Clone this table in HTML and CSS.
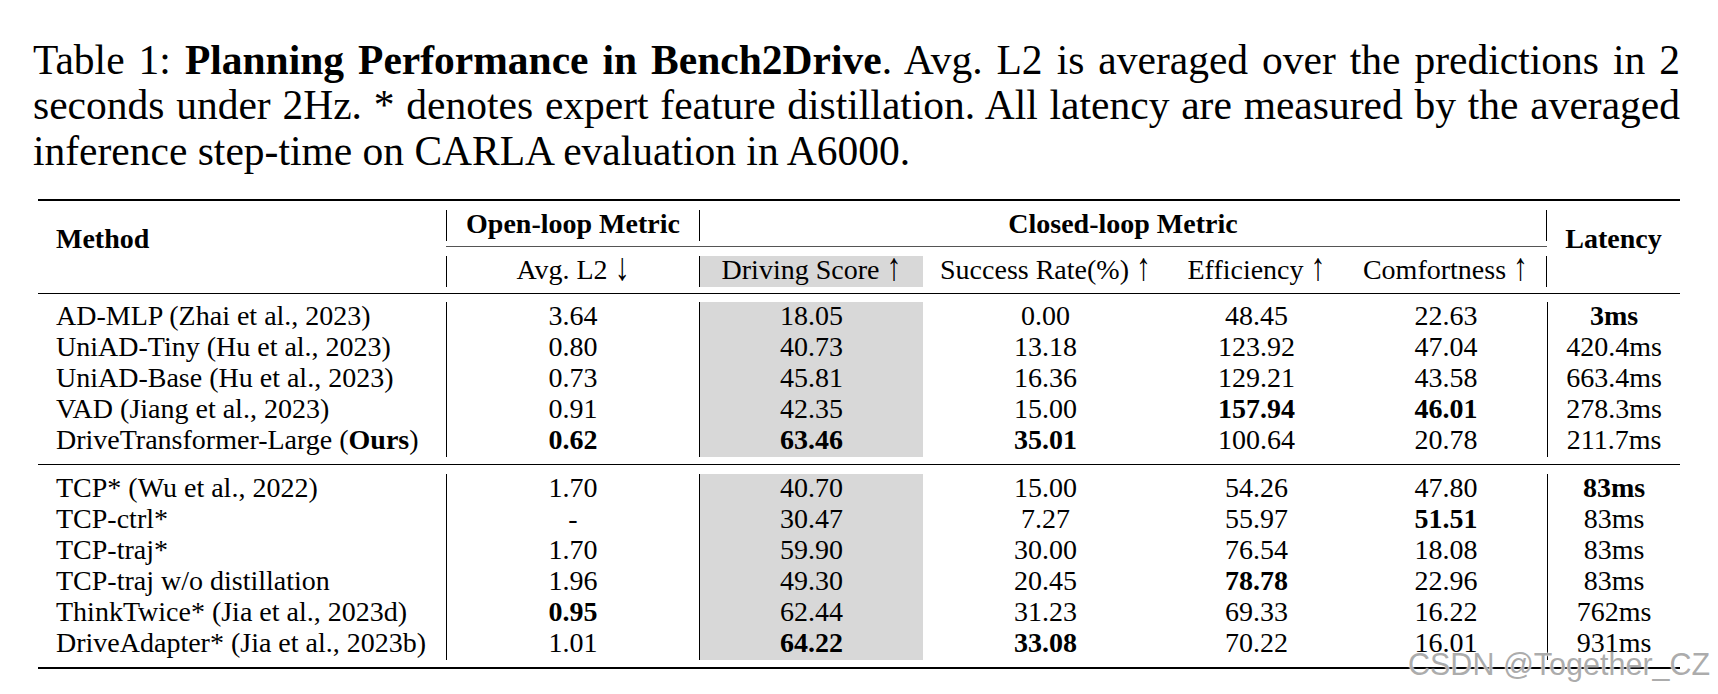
FILE: index.html
```html
<!DOCTYPE html>
<html>
<head>
<meta charset="utf-8">
<title>Table 1</title>
<link rel="stylesheet" href="styles.css">
</head>
<body>
<div class="page">
  <div class="caption">
    <div class="cap-line">Table 1: <b>Planning Performance in Bench2Drive</b>. Avg. L2 is averaged over the predictions in 2</div>
    <div class="cap-line">seconds under 2Hz. * denotes expert feature distillation. All latency are measured by the averaged</div>
    <div class="cap-line last">inference step-time on CARLA evaluation in A6000.</div>
  </div>

  <div class="table">
    <div class="rule thick"></div>
    <div class="thead">
      <div class="h-method">Method</div>
      <div class="h-group open"><div class="bar bl">Open-loop Metric</div></div>
      <div class="h-group closed"><div class="bar bl br">Closed-loop Metric</div></div>
      <div class="h-latency">Latency</div>
      <div class="h-sub c2"><div class="bar bl">Avg. L2 <span class="arrow">↓</span></div></div>
      <div class="h-sub c3"><div class="bar bl shade">Driving Score <span class="arrow">↑</span></div></div>
      <div class="h-sub c4"><div class="bar">Success Rate(%) <span class="arrow">↑</span></div></div>
      <div class="h-sub c5"><div class="bar">Efficiency <span class="arrow">↑</span></div></div>
      <div class="h-sub c6"><div class="bar br">Comfortness <span class="arrow">↑</span></div></div>
    </div>
    <div class="rule thin"></div>

    <div class="tbody">
      <div class="tr"><div class="td name">AD-MLP (Zhai et al., 2023)</div><div class="td bl">3.64</div><div class="td bl shade">18.05</div><div class="td">0.00</div><div class="td">48.45</div><div class="td">22.63</div><div class="td bl"><b>3ms</b></div></div>
      <div class="tr"><div class="td name">UniAD-Tiny (Hu et al., 2023)</div><div class="td bl">0.80</div><div class="td bl shade">40.73</div><div class="td">13.18</div><div class="td">123.92</div><div class="td">47.04</div><div class="td bl">420.4ms</div></div>
      <div class="tr"><div class="td name">UniAD-Base (Hu et al., 2023)</div><div class="td bl">0.73</div><div class="td bl shade">45.81</div><div class="td">16.36</div><div class="td">129.21</div><div class="td">43.58</div><div class="td bl">663.4ms</div></div>
      <div class="tr"><div class="td name">VAD (Jiang et al., 2023)</div><div class="td bl">0.91</div><div class="td bl shade">42.35</div><div class="td">15.00</div><div class="td"><b>157.94</b></div><div class="td"><b>46.01</b></div><div class="td bl">278.3ms</div></div>
      <div class="tr"><div class="td name">DriveTransformer-Large (<b>Ours</b>)</div><div class="td bl"><b>0.62</b></div><div class="td bl shade"><b>63.46</b></div><div class="td"><b>35.01</b></div><div class="td">100.64</div><div class="td">20.78</div><div class="td bl">211.7ms</div></div>
    </div>
    <div class="rule thin"></div>

    <div class="tbody second">
      <div class="tr"><div class="td name">TCP* (Wu et al., 2022)</div><div class="td bl">1.70</div><div class="td bl shade">40.70</div><div class="td">15.00</div><div class="td">54.26</div><div class="td">47.80</div><div class="td bl"><b>83ms</b></div></div>
      <div class="tr"><div class="td name">TCP-ctrl*</div><div class="td bl">-</div><div class="td bl shade">30.47</div><div class="td">7.27</div><div class="td">55.97</div><div class="td"><b>51.51</b></div><div class="td bl">83ms</div></div>
      <div class="tr"><div class="td name">TCP-traj*</div><div class="td bl">1.70</div><div class="td bl shade">59.90</div><div class="td">30.00</div><div class="td">76.54</div><div class="td">18.08</div><div class="td bl">83ms</div></div>
      <div class="tr"><div class="td name">TCP-traj w/o distillation</div><div class="td bl">1.96</div><div class="td bl shade">49.30</div><div class="td">20.45</div><div class="td"><b>78.78</b></div><div class="td">22.96</div><div class="td bl">83ms</div></div>
      <div class="tr"><div class="td name">ThinkTwice* (Jia et al., 2023d)</div><div class="td bl"><b>0.95</b></div><div class="td bl shade">62.44</div><div class="td">31.23</div><div class="td">69.33</div><div class="td">16.22</div><div class="td bl">762ms</div></div>
      <div class="tr"><div class="td name">DriveAdapter* (Jia et al., 2023b)</div><div class="td bl">1.01</div><div class="td bl shade"><b>64.22</b></div><div class="td"><b>33.08</b></div><div class="td">70.22</div><div class="td">16.01</div><div class="td bl">931ms</div></div>
    </div>
    <div class="rule thick"></div>
  </div>

  <div class="watermark">CSDN @Together_CZ</div>
</div>
</body>
</html>
```

FILE: styles.css
```css
html, body {
  margin: 0;
  padding: 0;
  background: #ffffff;
}

.page {
  position: relative;
  width: 1718px;
  height: 694px;
  overflow: hidden;
  font-family: "Liberation Serif", "Times New Roman", serif;
  color: #000;
}

.caption {
  width: 1647px;
  margin-left: 33px;
  padding-top: 38px;
  font-size: 41.5px;
  line-height: 45.3px;
}

.cap-line {
  text-align: justify;
  text-align-last: justify;
  white-space: nowrap;
}

.cap-line.last {
  text-align-last: left;
}

.table {
  width: 1642px;
  margin-left: 38px;
  margin-top: 25px;
  font-size: 28px;
}

.rule {
  background: #000;
}

.rule.thick {
  height: 2px;
}

.rule.thin {
  height: 1px;
}

.thead,
.tr {
  display: grid;
  grid-template-columns: 408px 253px 224px 245px 177px 202px 133px;
}

.h-method {
  grid-column: 1;
  grid-row: 1 / 3;
  padding-left: 18px;
  padding-top: 22px;
  font-weight: bold;
  line-height: 31px;
}

.h-latency {
  grid-column: 7;
  grid-row: 1 / 3;
  padding-top: 22px;
  font-weight: bold;
  line-height: 31px;
  text-align: center;
}

.h-group {
  grid-row: 1;
  padding-top: 9px;
  padding-bottom: 5px;
  border-bottom: 1px solid #555;
  font-weight: bold;
}

.h-group.open {
  grid-column: 2;
}

.h-group.closed {
  grid-column: 3 / 7;
}

.h-sub {
  grid-row: 2;
  padding-top: 9px;
  padding-bottom: 6px;
}

.h-sub.c2 { grid-column: 2; }
.h-sub.c3 { grid-column: 3; }
.h-sub.c4 { grid-column: 4; }
.h-sub.c5 { grid-column: 5; }
.h-sub.c6 { grid-column: 6; }

.bar {
  box-sizing: border-box;
  height: 31px;
  line-height: 27px;
  padding-bottom: 4px;
  text-align: center;
  white-space: nowrap;
}

.arrow {
  display: inline-block;
  font-size: 30px;
  line-height: 20px;
  transform: scaleY(1.3);
  transform-origin: 50% 80%;
}

.bl {
  border-left: 1px solid #000;
}

.br {
  border-right: 1px solid #000;
}

.shade {
  background: #d8d8d8;
}

.tbody {
  padding-top: 8px;
  padding-bottom: 7px;
}

.tbody.second {
  padding-top: 9px;
}

.td {
  box-sizing: border-box;
  height: 31px;
  line-height: 27px;
  padding-bottom: 4px;
  text-align: center;
  white-space: nowrap;
}

.td.name {
  text-align: left;
  padding-left: 18px;
}

.watermark {
  position: absolute;
  left: 1408px;
  top: 649px;
  font-family: "Liberation Sans", Arial, sans-serif;
  font-size: 30.5px;
  line-height: 30px;
  color: rgba(135, 135, 135, 0.7);
  text-shadow: 0 0 2px #fff, 0 0 1px #fff;
  white-space: nowrap;
}
```
